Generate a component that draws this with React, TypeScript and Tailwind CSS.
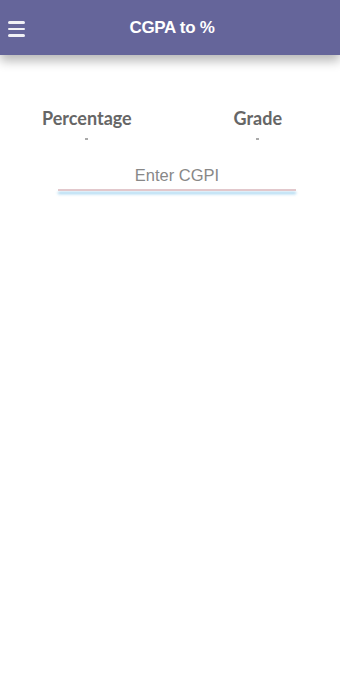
export default function App() {
  return (
    <div className="min-h-[680px] w-[340px] bg-white font-['Liberation_Sans',Arial,sans-serif]">
      <header className="relative flex h-[55px] items-center justify-center bg-[#65659a] shadow-[0_6px_10px_rgba(0,0,0,0.28)]">
        <button className="absolute left-[8px] top-[21px] flex w-[17px] flex-col gap-[4px]">
          <span className="block h-[2.5px] w-full rounded-sm bg-white/90" />
          <span className="block h-[2.5px] w-full rounded-sm bg-white/90" />
          <span className="block h-[2.5px] w-full rounded-sm bg-white/90" />
        </button>
        <h1 className="pl-[4px] text-[17px] font-bold tracking-[-0.3px] text-white">CGPA to %</h1>
      </header>

      <div className="mt-[53px] flex justify-between pl-[42px] pr-[58px] font-['Lato',sans-serif] text-[18px] font-bold leading-[20px] text-[#666]">
        <div className="flex flex-col items-center">
          <span>Percentage</span>
          <span className="mt-[10px] block h-[2px] w-[3px] bg-[#aaa]" />
        </div>
        <div className="flex flex-col items-center">
          <span>Grade</span>
          <span className="mt-[10px] block h-[2px] w-[3px] bg-[#aaa]" />
        </div>
      </div>

      <div className="ml-[58px] mt-[25px] w-[238px]">
        <div className="text-center text-[16.5px] leading-[20px] text-[#888]">Enter CGPI</div>
        <div className="mt-[4px] h-[2px] w-full bg-[#e2c8cc] shadow-[0_3px_3px_rgba(110,185,230,0.75)]" />
      </div>
    </div>
  );
}
